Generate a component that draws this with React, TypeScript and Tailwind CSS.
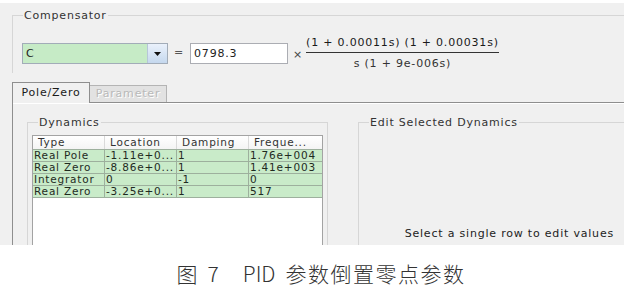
const ROWS = [
  { type: "Real Pole", location: "-1.11e+0...", damping: "1", freq: "1.76e+004" },
  { type: "Real Zero", location: "-8.86e+0...", damping: "1", freq: "1.41e+003" },
  { type: "Integrator", location: "0", damping: "-1", freq: "0" },
  { type: "Real Zero", location: "-3.25e+0...", damping: "1", freq: "517" },
]

const COLS = ["w-[72px]", "w-[72px]", "w-[72px]", "flex-1"]

function GroupTitle({ children }: { children: string }) {
  return (
    <span className="absolute -top-[7px] left-[10px] bg-[#f0f0f0] px-[1px] leading-[13px] text-[#333]">
      {children}
    </span>
  )
}

function DynamicsTable() {
  return (
    <div className="flex flex-1 flex-col border border-b-0 border-[#a3a3a3] bg-white text-[10.5px] tracking-[0.8px]">
      <div className="flex h-[13px] bg-gradient-to-b from-white to-[#f4f4f4] leading-[13px] text-[#333]">
        {["Type", "Location", "Damping", "Freque..."].map((h, i) => (
          <div key={h} className={`${COLS[i]} whitespace-nowrap border-r border-[#dadada] pl-[5px] last:border-r-0`}>
            {h}
          </div>
        ))}
      </div>
      {ROWS.map((r, ri) => (
        <div key={ri} className="flex h-[12px] border-t border-[#9db09d] bg-[#c9ebc9] leading-[11px] text-[#1f2a1f]">
          {[r.type, r.location, r.damping, r.freq].map((v, i) => (
            <div key={i} className={`${COLS[i]} whitespace-nowrap border-r border-[#9db09d] pl-[1px] last:border-r-0`}>
              {v}
            </div>
          ))}
        </div>
      ))}
      <div className="flex-1 border-t border-[#9db09d]" />
    </div>
  )
}

export default function App() {
  return (
    <div className="flex h-[302px] w-[630px] flex-col bg-white font-['DejaVu_Sans',sans-serif] text-[11px] tracking-[0.8px] text-[#2b2b2b]">
      <div className="mt-[3px] flex h-[242px] w-[624px] flex-col bg-[#f0f0f0]">
        {/* Compensator */}
        <div className="relative ml-[12px] mt-[12px] h-[58px] border-l border-t border-[#d6d6d6]">
          <GroupTitle>Compensator</GroupTitle>
          <div className="flex items-center pl-[9px] pt-[20px]">
            <div className="flex h-[21px] w-[146px] items-center border border-[#a2acb8] bg-[#c6ebc6]">
              <span className="flex-1 pl-[3px] leading-[19px] text-[#222]">C</span>
              <div className="flex h-full w-[20px] items-center justify-center border-l border-[#b6c6d8] bg-gradient-to-b from-[#eaf1fb] to-[#c5d8ee]">
                <svg width="7" height="4" viewBox="0 0 7 4">
                  <path d="M0 0h7L3.5 4z" fill="#111" />
                </svg>
              </div>
            </div>
            <span className="ml-[6px] text-[#555]">=</span>
            <div className="ml-[6px] flex h-[21px] w-[98px] items-center border border-[#abadb3] bg-white pl-[3px] leading-[19px] text-[#222]">
              0798.3
            </div>
            <span className="ml-[5px] mt-[4px] text-[#444]">×</span>
            <div className="ml-[3px] flex flex-col items-center text-[#1a1a1a]">
              <span className="mb-[2px] leading-[14px]">(1 + 0.00011s) (1 + 0.00031s)</span>
              <span className="h-px w-full bg-[#333]" />
              <span className="mt-[4px] leading-[14px] text-[#333]">s (1 + 9e-006s)</span>
            </div>
          </div>
        </div>

        {/* Tabs */}
        <div className="ml-[12px] mt-[9px] flex items-end">
          <div className="relative z-10 -mb-px flex h-[21px] w-[78px] items-center justify-center border border-b-0 border-[#8e8e8e] bg-[#f0f0f0] text-[#1a1a1a]">
            Pole/Zero
          </div>
          <div className="flex h-[17px] w-[77px] items-center justify-center border border-b-0 border-l-0 border-[#b4b4b4] bg-[#e2e2e2] text-[#b9b9b9] [text-shadow:1px_1px_0_#fff]">
            Parameter
          </div>
        </div>

        {/* Tab panel */}
        <div className="ml-[12px] flex flex-1 border-l border-t border-[#8e8e8e] pl-[14px] pt-[19px] shadow-[inset_0_1px_0_#fff]">
          <div className="relative flex w-[301px] flex-col border-l border-r border-t border-[#d6d6d6] pl-[4px] pr-[4px] pt-[12px]">
            <GroupTitle>Dynamics</GroupTitle>
            <DynamicsTable />
          </div>
          <div className="relative ml-[30px] flex flex-1 flex-col items-end justify-end border-l border-t border-[#d6d6d6] pb-[5px] pr-[10px]">
            <GroupTitle>Edit Selected Dynamics</GroupTitle>
            <span className="leading-[13px] text-[#222]">Select a single row to edit values</span>
          </div>
        </div>
      </div>

      {/* Caption */}
      <div className="flex flex-1 items-center justify-center pl-[12px] font-['Noto_Sans_CJK_SC',sans-serif] text-[21px] font-light tracking-normal text-[#333]">
        <span>图</span>
        <span className="ml-[10px]">7</span>
        <span className="ml-[24px]">PID</span>
        <span className="ml-[10px] tracking-[1.5px]">参数倒置零点参数</span>
      </div>
    </div>
  )
}
